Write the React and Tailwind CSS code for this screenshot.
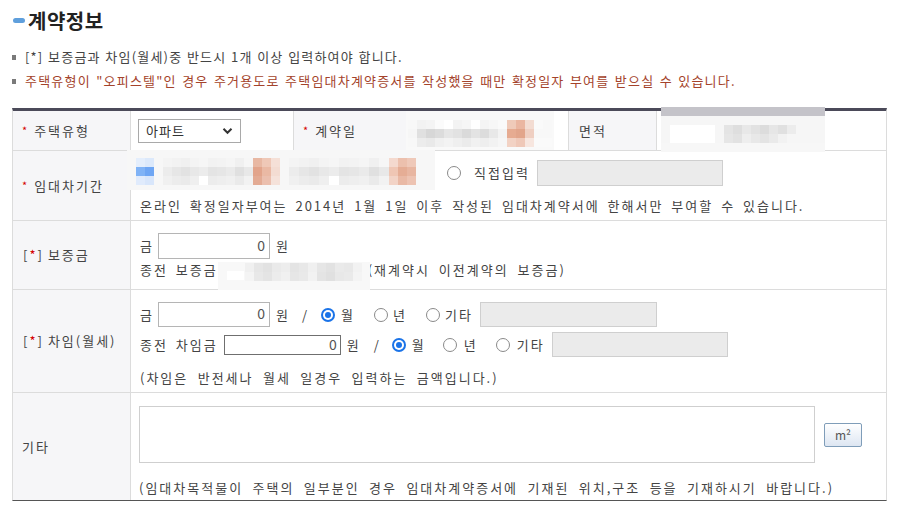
import React from "react";

const FONT = { fontFamily: '"Noto Sans CJK KR", "Noto Sans", sans-serif' };

function Mosaic({ x, y, w, h, bg, cells }) {
  return (
    <div
      className="absolute"
      style={{ left: x, top: y, width: w, height: h, background: bg }}
    >
      {cells.map((c, i) => (
        <div
          key={i}
          className="absolute"
          style={{ left: c[0] - x, top: c[1] - y, width: c[2], height: c[3], background: c[4] }}
        />
      ))}
    </div>
  );
}

function rowCells(x0, y0, cw, ch, colors) {
  const out = [];
  colors.forEach((c, i) => {
    if (c) out.push([x0 + i * cw, y0, cw, ch, c]);
  });
  return out;
}

function Radio({ checked, className = "" }) {
  return checked ? (
    <span className={"flex h-[14px] w-[14px] shrink-0 items-center justify-center rounded-full bg-[#1a73e8] " + className}>
      <span className="flex h-[10px] w-[10px] items-center justify-center rounded-full bg-white">
        <span className="h-[6px] w-[6px] rounded-full bg-[#1a73e8]" />
      </span>
    </span>
  ) : (
    <span className={"block h-[14px] w-[14px] shrink-0 rounded-full border border-[#8a8a8a] bg-white " + className} />
  );
}

function Req() {
  return <span className="mr-[5px] text-[11px] text-[#d40000]">*</span>;
}

export default function App() {
  const blur1 = [
    ...rowCells(408, 120, 9, 9, ["#f8f8f8", "#f2f2f2", "#f4f4f4", "#fbfbfb", "#ffffff", "#f3f3f3", "#f6f6f6", "#ffffff", "#f4f4f4", "#f7f7f7", "#fafafa", "#efcab9", "#eab6a1", "#f3dcd2", "#fafafa", "#f8f8f8"]),
    ...rowCells(408, 129, 9, 9, ["#f6f6f6", "#e0e0e0", "#d7d7d7", "#dcdcdc", "#e6e6e6", "#e2e2e2", "#dadada", "#e3e3e3", "#dcdcdc", "#e8e8e8", "#f3f3f3", "#e6ab91", "#e2a58b", "#efcfc2", "#f8f8f8", "#f8f8f8"]),
    ...rowCells(408, 138, 9, 9, ["#f8f8f8", "#ececec", "#e9e9e9", "#f0f0f0", "#f3f3f3", "#efefef", "#ebebeb", "#f1f1f1", "#eeeeee", "#f2f2f2", "#f6f6f6", "#f2d2c4", "#efc8b8", "#f7e6df", "#fafafa", "#fafafa"]),
  ];
  const blur2 = [
    [661, 107, 164, 9, "#c4c3c9"],
    [670, 125, 45, 18, "#ffffff"],
    ...rowCells(724, 125, 9, 9, ["#e4e4e4", "#dedede", "#e8e8e8", "#e2e2e2", "#dcdcdc", "#e6e6e6", "#e0e0e0", "#ececec"]),
    ...rowCells(724, 134, 9, 9, ["#e6e6e6", "#e2e2e2", "#eeeeee", "#e8e8e8", "#e4e4e4", "#eaeaea", "#f2f2f2", "#f6f6f6"]),
    [661, 143, 164, 9, "#f7f7f7"],
  ];
  const grays1 = ["#ececec", "#e6e6e6", "#e2e2e2", "#e8e8e8", "#ececec", "#e4e4e4", "#e6e6e6", "#eaeaea", "#e0e0e0", "#e8e8e8"];
  const grays2 = ["#f0f0f0", "#ececec", "#eaeaea", "#efefef", "#ffffff", "#ececec", "#eeeeee", "#f0f0f0", "#eaeaea", "#f2f2f2"];
  const grays3 = ["#f4f4f4", "#f2f2f2", "#f0f0f0", "#f4f4f4", "#f6f6f6", "#f2f2f2", "#f3f3f3", "#f5f5f5", "#f0f0f0", "#f6f6f6"];
  const blur3 = [
    ...rowCells(136, 158, 9, 9, ["#e4eefc", "#dce9fb"]),
    ...rowCells(136, 167, 9, 9, ["#80b3f6", "#6ea6f4"]),
    ...rowCells(136, 176, 9, 9, ["#e0ebfc", "#d8e6fb"]),
    ...rowCells(163, 158, 9, 9, grays3),
    ...rowCells(163, 167, 9, 9, grays1),
    ...rowCells(163, 176, 9, 9, grays2),
    ...rowCells(253, 158, 9, 9, ["#e8b8a3", "#efc8b7", "#f5e0d7"]),
    ...rowCells(253, 167, 9, 9, ["#e2a48b", "#eab9a4", "#f3dcd2"]),
    ...rowCells(253, 176, 9, 9, ["#e3ab94", "#ebbfae", "#f5e2da"]),
    ...rowCells(289, 158, 10, 9, grays3),
    ...rowCells(289, 167, 10, 9, grays1),
    ...rowCells(289, 176, 10, 9, grays2),
    ...rowCells(389, 158, 9, 9, ["#f4d9ce", "#ecc0ad", "#efc9b9"]),
    ...rowCells(389, 167, 9, 9, ["#efc6b4", "#e5ad95", "#e8b6a1"]),
    ...rowCells(389, 176, 9, 9, ["#f2d3c6", "#e9b9a5", "#edc3b2"]),
  ];
  const blur4 = [
    [227, 271, 17, 9, "#ffffff"],
    ...rowCells(245, 263, 9, 9, ["#f0f0f0", "#e6e6e6", "#e2e2e2", "#eaeaea", "#ededed", "#e4e4e4", "#e8e8e8", "#f0f0f0", "#e6e6e6", "#e2e2e2", "#eaeaea", "#e8e8e8", "#f2f2f2"]),
    ...rowCells(245, 272, 9, 9, ["#f4f4f4", "#e8e8e8", "#e4e4e4", "#ececec", "#f0f0f0", "#e6e6e6", "#e9e9e9", "#f2f2f2", "#e4e4e4", "#e0e0e0", "#e8e8e8", "#eaeaea", "#f4f4f4"]),
  ];

  const label = "flex w-[118px] shrink-0 items-center border-r border-[#dcdcdc] bg-[#f6f6f8] pl-[9px] text-[13px] tracking-[2px] text-[#444] [word-spacing:2px]";
  const txt = "text-[13px] tracking-[2px] text-[#444] [word-spacing:3px] leading-[16px] whitespace-nowrap";

  return (
    <div className="relative h-[511px] w-[899px] overflow-hidden bg-white" style={FONT}>
      {/* title */}
      <div className="flex h-[40px] items-center pl-[13px] pt-[1px]">
        <span className="h-[5px] w-[12px] rounded-full bg-[#5f9fdc]" />
        <span className="ml-[3px] text-[20px] font-bold leading-none tracking-[0.5px] text-[#222]">계약정보</span>
      </div>
      {/* notes */}
      <div className="mt-[9px] flex flex-col gap-[8px] pl-[12px] text-[13px] leading-[16px] tracking-[1.2px]">
        <div className="flex items-center">
          <span className="mr-[9px] h-[5px] w-[4px] bg-[#7a7a7a]" />
          <span className="whitespace-nowrap text-[#444] [word-spacing:0.5px]">[*] 보증금과 차임(월세)중 반드시 1개 이상 입력하여야 합니다.</span>
        </div>
        <div className="flex items-center">
          <span className="mr-[9px] h-[5px] w-[4px] bg-[#7a7a7a]" />
          <span className="whitespace-nowrap text-[#a4432b] [word-spacing:1.3px]">주택유형이 "오피스텔"인 경우 주거용도로 주택임대차계약증서를 작성했을 때만 확정일자 부여를 받으실 수 있습니다.</span>
        </div>
      </div>

      {/* table */}
      <div className="ml-[12px] mt-[19px] w-[875px] border-x border-t-[3px] border-b border-x-[#dcdcdc] border-t-[#4b4a59] border-b-[#555]">
        {/* row 1 */}
        <div className="flex h-[40px] border-b border-[#dcdcdc]">
          <div className={label}><Req />주택유형</div>
          <div className="flex w-[163px] shrink-0 items-center border-r border-[#dcdcdc] pl-[7px]">
            <div className="flex h-[24px] w-[103px] items-center justify-between border border-[#a9a9a9] bg-white pl-[7px] pr-[7px] text-[13px] tracking-[1px] text-[#333]">
              <span>아파트</span>
              <svg width="11" height="8" viewBox="0 0 11 8"><path d="M1.5 1.8 L5.5 5.8 L9.5 1.8" fill="none" stroke="#333" strokeWidth="2" /></svg>
            </div>
          </div>
          <div className="flex w-[113px] shrink-0 items-center border-r border-[#dcdcdc] bg-[#f6f6f8] pl-[9px] text-[13px] tracking-[2px] text-[#444]"><Req />계약일</div>
          <div className="w-[162px] shrink-0 border-r border-[#dcdcdc]" />
          <div className="flex w-[88px] shrink-0 items-center border-r border-[#dcdcdc] bg-[#f6f6f8] pl-[10px] text-[13px] tracking-[2px] text-[#444]">면적</div>
          <div className="flex-1" />
        </div>
        {/* row 2 */}
        <div className="flex h-[70px] border-b border-[#dcdcdc]">
          <div className={label}><Req />임대차기간</div>
          <div className="flex flex-col pl-[9px] pt-[9px]">
            <div className="flex h-[26px] items-center">
              <div className="w-[307px] shrink-0" />
              <Radio />
              <span className={txt + " ml-[13px]"}>직접입력</span>
              <span className="ml-[7px] h-[26px] w-[186px] border border-[#cfcfcf] bg-[#ebebeb]" />
            </div>
            <div className={txt + " mt-[12px] [word-spacing:3.3px]"}>온라인 확정일자부여는 2014년 1월 1일 이후 작성된 임대차계약서에 한해서만 부여할 수 있습니다.</div>
          </div>
        </div>
        {/* row 3 */}
        <div className="flex h-[69px] border-b border-[#dcdcdc]">
          <div className={label}><span className="mr-[4px] pl-[1px]">[<span className="text-[#d40000]">*</span>]</span>보증금</div>
          <div className="flex flex-col pl-[9px] pt-[12px]">
            <div className="flex h-[26px] items-center">
              <span className={txt}>금</span>
              <span className="ml-[4px] flex h-[26px] w-[112px] items-end justify-end border border-[#b5b5b5] bg-white pb-[2px] pr-[4px] text-[14px] text-[#555]">0</span>
              <span className={txt + " ml-[6px]"}>원</span>
            </div>
            <div className="mt-[3px] flex h-[16px] items-center">
              <span className={txt}>종전 보증금</span>
              <span className="w-[150px] shrink-0" />
              <span className={txt + " tracking-[2.4px] [word-spacing:4px]"}>(재계약시 이전계약의 보증금)</span>
            </div>
          </div>
        </div>
        {/* row 4 */}
        <div className="flex h-[103px] border-b border-[#dcdcdc]">
          <div className={label}><span className="mr-[4px] pl-[1px]">[<span className="text-[#d40000]">*</span>]</span>차임(월세)</div>
          <div className="flex flex-col pl-[9px] pt-[12px]">
            <div className="flex h-[25px] items-center">
              <span className={txt}>금</span>
              <span className="ml-[4px] flex h-[25px] w-[112px] items-end justify-end border border-[#b5b5b5] bg-white pb-[2px] pr-[4px] text-[14px] text-[#555]">0</span>
              <span className={txt + " ml-[6px]"}>원</span>
              <span className={txt + " ml-[12px]"}>/</span>
              <Radio checked className="ml-[12px]" />
              <span className={txt + " ml-[6px]"}>월</span>
              <Radio className="ml-[19px]" />
              <span className={txt + " ml-[5px]"}>년</span>
              <Radio className="ml-[19px]" />
              <span className={txt + " ml-[5px]"}>기타</span>
              <span className="ml-[7px] h-[25px] w-[177px] border border-[#cfcfcf] bg-[#ebebeb]" />
            </div>
            <div className="mt-[5px] flex h-[25px] items-center">
              <span className={txt}>종전 차임금</span>
              <span className="ml-[6px] flex h-[20px] w-[117px] items-center justify-end border border-[#6f6f6f] bg-white pr-[3px] text-[14px] text-[#555]">0</span>
              <span className={txt + " ml-[6px]"}>원</span>
              <span className={txt + " ml-[13px]"}>/</span>
              <Radio checked className="ml-[11px]" />
              <span className={txt + " ml-[6px]"}>월</span>
              <Radio className="ml-[17px]" />
              <span className={txt + " ml-[7px]"}>년</span>
              <Radio className="ml-[18px]" />
              <span className={txt + " ml-[7px]"}>기타</span>
              <span className="ml-[7px] h-[25px] w-[176px] border border-[#cfcfcf] bg-[#ebebeb]" />
            </div>
            <div className={txt + " mt-[13px] [word-spacing:4.5px]"}>(차임은 반전세나 월세 일경우 입력하는 금액입니다.)</div>
          </div>
        </div>
        {/* row 5 */}
        <div className="flex h-[107px]">
          <div className={label}>기타</div>
          <div className="flex flex-col pl-[8px] pt-[13px]">
            <div className="flex items-center">
              <div className="h-[57px] w-[676px] border border-[#cfcfcf] bg-white" />
              <div className="ml-[9px] flex h-[24px] w-[38px] items-center justify-center rounded-[2px] border border-[#7f9db9] bg-gradient-to-b from-[#ffffff] to-[#dde6f2] text-[12px] text-[#555]">m²</div>
            </div>
            <div className={txt + " mt-[17px] [word-spacing:4.5px]"}>(임대차목적물이 주택의 일부분인 경우 임대차계약증서에 기재된 위치,구조 등을 기재하시기 바랍니다.)</div>
          </div>
        </div>
      </div>

      {/* redaction mosaics */}
      <Mosaic x={406} y={111} w={148} h={39} bg="#f9f9f9" cells={blur1} />
      <Mosaic x={661} y={107} w={164} h={45} bg="#f6f6f6" cells={blur2} />
      <Mosaic x={127} y={150} w={308} h={40} bg="#f7f7f7" cells={blur3} />
      <Mosaic x={218} y={262} w={152} h={28} bg="#f8f8f8" cells={blur4} />
    </div>
  );
}
